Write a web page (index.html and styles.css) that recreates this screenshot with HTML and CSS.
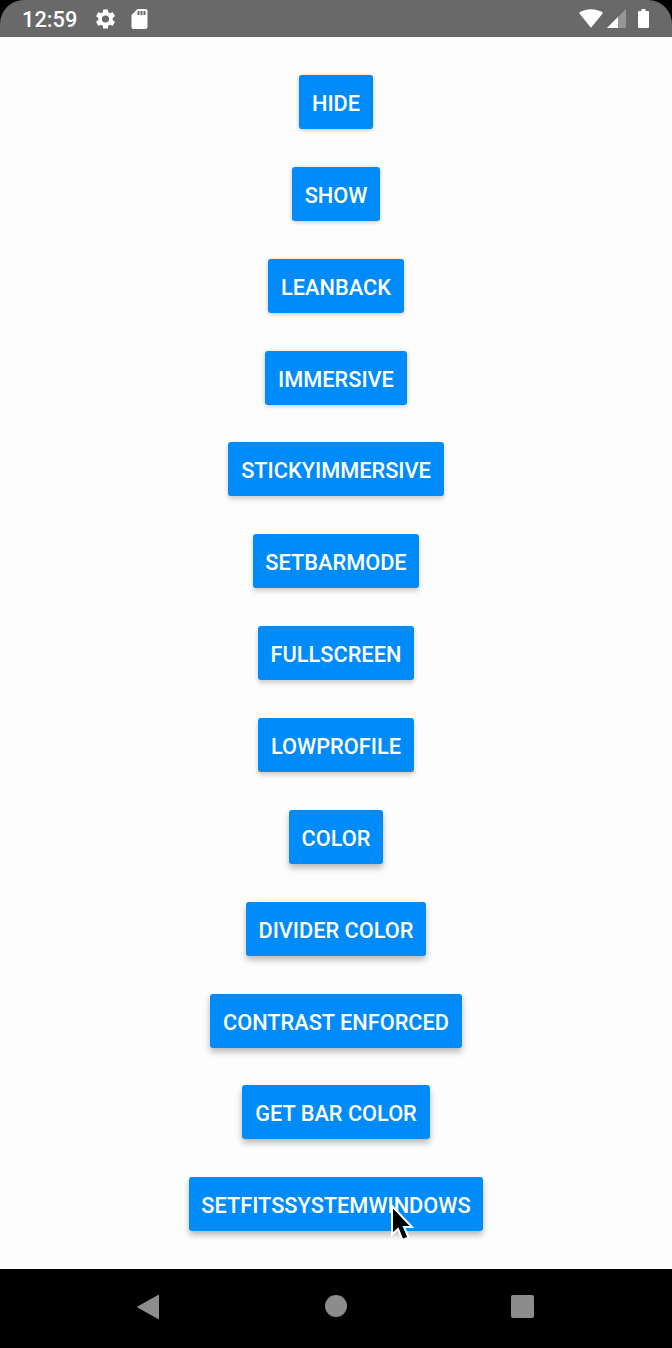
FILE: index.html
```html
<!DOCTYPE html>
<html lang="en">
<head>
<meta charset="utf-8">
<title>System bars</title>
<link rel="stylesheet" href="styles.css">
</head>
<body>
<div class="phone">
  <header class="status">
    <span class="time">12:59</span>
    <svg class="gear" viewBox="2 2 20 20"><path d="M19.14 12.94c.04-.3.06-.61.06-.94 0-.32-.02-.64-.07-.94l2.03-1.58c.18-.14.23-.41.12-.61l-1.92-3.32c-.12-.22-.37-.29-.59-.22l-2.39.96c-.5-.38-1.03-.7-1.62-.94l-.36-2.54c-.04-.24-.24-.41-.48-.41h-3.84c-.24 0-.43.17-.47.41l-.36 2.54c-.59.24-1.13.57-1.62.94l-2.39-.96c-.22-.08-.47 0-.59.22L2.74 8.87c-.12.21-.08.47.12.61l2.03 1.58c-.05.3-.09.63-.09.94s.02.64.07.94l-2.03 1.58c-.18.14-.23.41-.12.61l1.92 3.32c.12.22.37.29.59.22l2.39-.96c.5.38 1.03.7 1.62.94l.36 2.54c.05.24.24.41.48.41h3.84c.24 0 .44-.17.47-.41l.36-2.54c.59-.24 1.13-.56 1.62-.94l2.39.96c.22.08.47 0 .59-.22l1.92-3.32c.12-.22.07-.47-.12-.61l-2.01-1.58zM12 15.6A3.6 3.6 0 1 1 12 8.4a3.6 3.6 0 0 1 0 7.2z"/></svg>
    <svg class="sd" viewBox="4 2 16 20"><path d="M18 2h-8L4 8v12c0 1.100.9 2 2 2h12c1.100 0 2-.9 2-2V4c0-1.100-.9-2-2-2zm-6 6h-2V4h2v4zm3 0h-2V4h2v4zm3 0h-2V4h2v4z"/></svg>
    <span class="spacer"></span>
    <svg class="wifi" viewBox="0 0 24 19"><path d="M0 4Q5 .3 12 .3T24 4L12 18.800z"/></svg>
    <svg class="signal" viewBox="0 0 19 19"><path class="dim" d="M0 19L19 0v19z"/><path d="M0 19L11 8v11z"/></svg>
    <svg class="battery" viewBox="0 0 11 19"><path d="M3.500 0h4v2H10q1 0 1 1v15q0 1-1 1H1q-1 0-1-1V3q0-1 1-1h2.500z"/></svg>
  </header>
  <main class="content">
    <button class="btn s1">HIDE</button>
    <button class="btn s1">SHOW</button>
    <button class="btn s1">LEANBACK</button>
    <button class="btn s1">IMMERSIVE</button>
    <button class="btn s2">STICKYIMMERSIVE</button>
    <button class="btn s2">SETBARMODE</button>
    <button class="btn s2">FULLSCREEN</button>
    <button class="btn s2">LOWPROFILE</button>
    <button class="btn s3">COLOR</button>
    <button class="btn s3">DIVIDER COLOR</button>
    <button class="btn s3">CONTRAST ENFORCED</button>
    <button class="btn s3">GET BAR COLOR</button>
    <button class="btn s3">SETFITSSYSTEMWINDOWS</button>
  </main>
  <nav class="navbar">
    <svg class="back" viewBox="0 0 23 26"><path d="M21 1Q22 .4 22 2v22q0 1.600-1 1L.800 13.800q-1-.8 0-1.600z"/></svg>
    <span class="home"></span>
    <span class="recent"></span>
  </nav>
</div>
<svg class="cursor" viewBox="0 0 25 38"><path d="M2 2v28.500l6-5.500 4.500 11 6-2.500-4.500-10.500H22z"/></svg>
</body>
</html>
```
FILE: styles.css
```css
body { margin: 0; background: #000; font-family: Roboto, "Liberation Sans", sans-serif; }
.phone { display: flex; flex-direction: column; width: 672px; height: 1348px; overflow: hidden; border-radius: 24px 24px 0 0; }
.status { display: flex; align-items: center; box-sizing: border-box; height: 37px; flex: none; padding: 0 23px 0 22px; background: #696969; color: #fff; }
.status svg { display: block; fill: #fff; }
.time { width: 73px; padding-top: 2px; font-size: 21.8px; font-weight: 500; line-height: 35px; }
.gear { width: 21px; height: 20px; }
.sd { width: 17px; height: 20px; margin-left: 15px; }
.spacer { flex: 1; }
.wifi { width: 24px; height: 19px; }
.signal { width: 19px; height: 19px; margin: 0 12px 0 4px; }
.status .dim { fill: #969696; }
.battery { width: 11px; height: 19px; }
.content { display: flex; flex: none; flex-direction: column; align-items: center; box-sizing: border-box; height: 1232px; gap: 37.860px; padding-top: 38px; background: #fdfdfd; }
.btn { flex: none; height: 54px; padding: 3px 12.7px 0; border: 0; border-radius: 3px; background: #008bfa; color: #fff; font: 500 21.75px/51px Roboto, "Liberation Sans", sans-serif; white-space: nowrap; }
.s1 { box-shadow: 0 1px 4px rgba(0, 0, 0, .24); }
.s2 { box-shadow: 0 3px 5px rgba(0, 0, 0, .2); }
.s3 { box-shadow: 0 4px 6px rgba(0, 0, 0, .27); }
.navbar { display: flex; flex: 1; align-items: flex-start; background: #000; }
.back { width: 23px; height: 26px; margin: 24.5px 0 0 137px; fill: #8c8c8c; }
.home { width: 22px; height: 22px; margin: 26px 0 0 164.500px; border-radius: 50%; background: #8c8c8c; }
.recent { width: 23px; height: 23px; margin: 26px 0 0 164.500px; border-radius: 2px; background: #8c8c8c; }
.cursor { position: absolute; left: 390px; top: 1204px; width: 25px; height: 38px; fill: #000; stroke: #fff; stroke-width: 2; }
```
